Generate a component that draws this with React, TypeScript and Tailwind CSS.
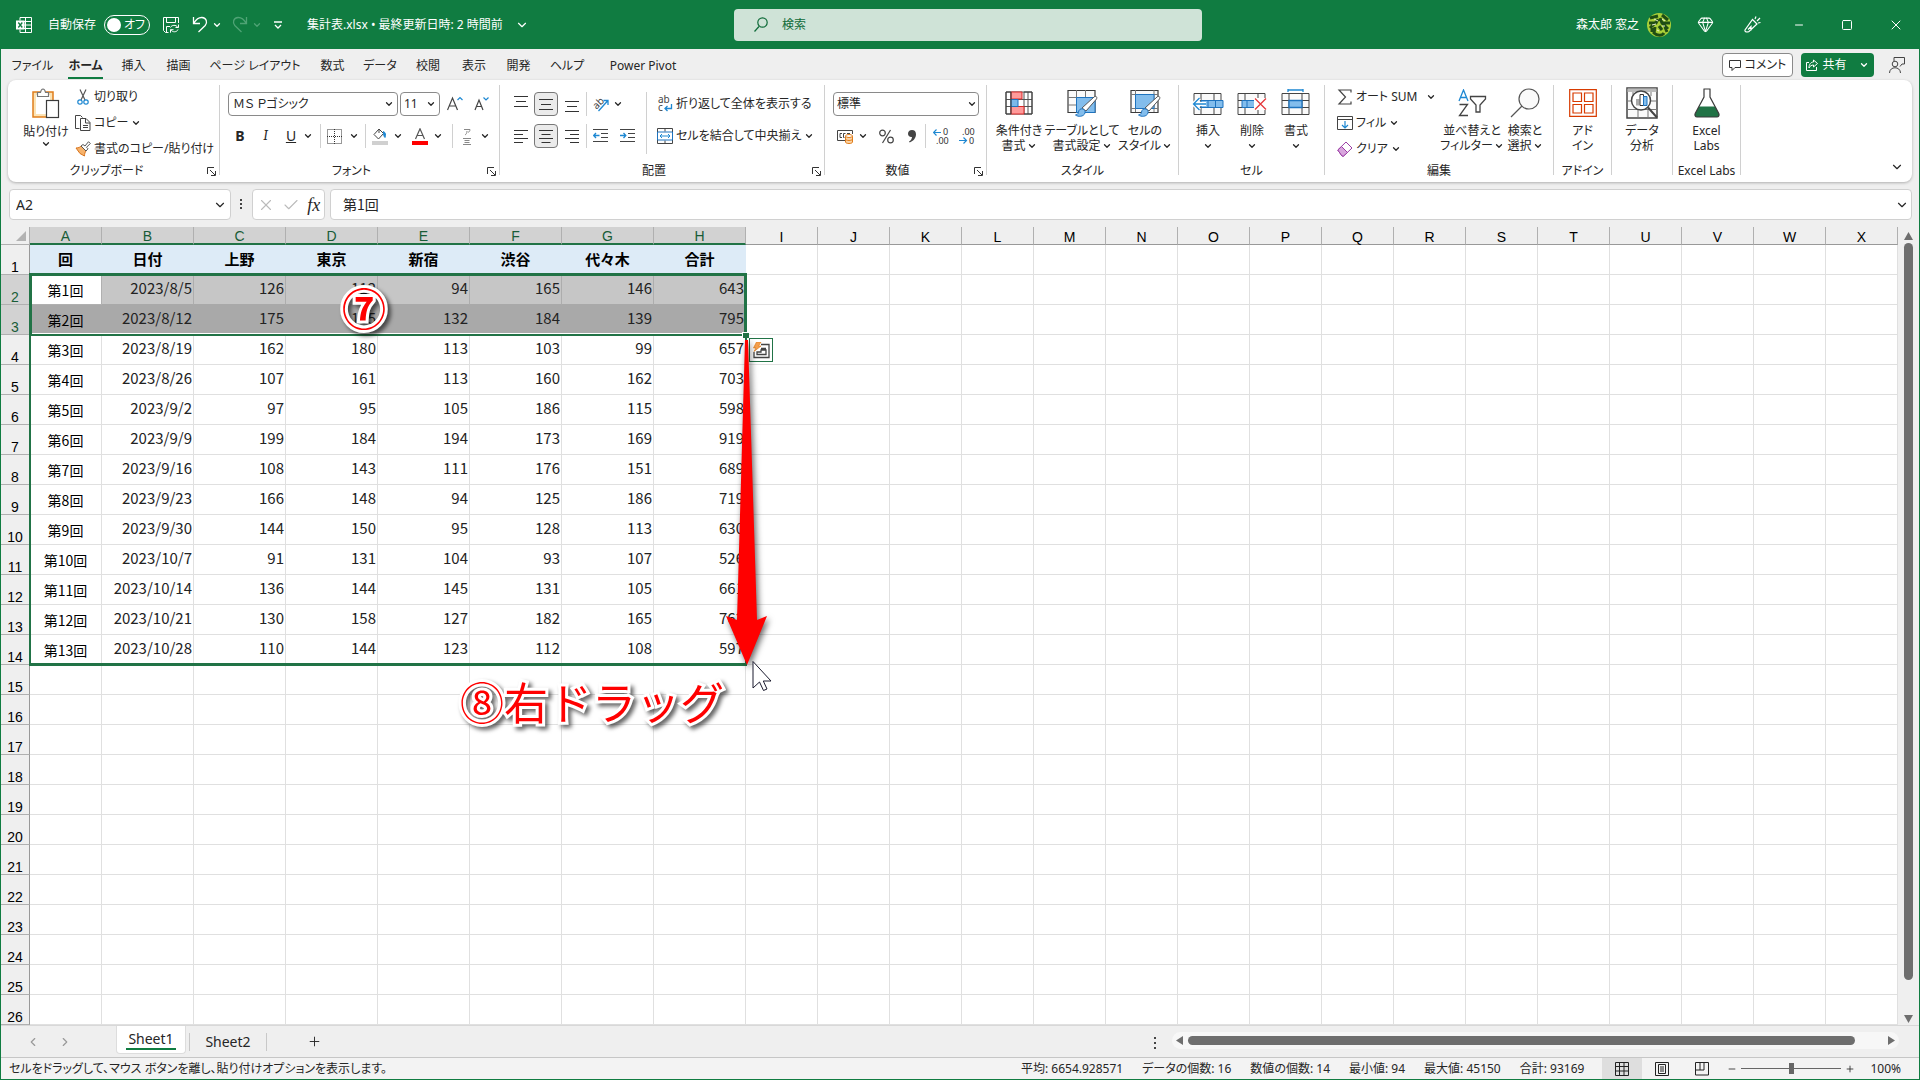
import React from 'react';
import { ChevronDown, ChevronLeft, ChevronRight, Check, Gem, Minus, Plus, Square, X } from 'lucide-react';

const tabs = [
  { name: 'ファイル', width: 'w-[55px]' },
  { name: 'ホーム', width: 'w-[51px]' },
  { name: '挿入', width: 'w-[45px]' },
  { name: '描画', width: 'w-[45px]' },
  { name: 'ページ レイアウト', width: 'w-[108px]' },
  { name: '数式', width: 'w-[47px]' },
  { name: 'データ', width: 'w-[48px]' },
  { name: '校閲', width: 'w-[48px]' },
  { name: '表示', width: 'w-[44px]' },
  { name: '開発', width: 'w-[45px]' },
  { name: 'ヘルプ', width: 'w-[52px]' },
  { name: 'Power Pivot', width: 'w-[100px]' },
];

const columns = 'ABCDEFGHIJKLMNOPQRSTUVWX'.split('');
const headings = ['回', '日付', '上野', '東京', '新宿', '渋谷', '代々木', '合計'];
const records: (string | number)[][] = [
  ['第1回', '2023/8/5', 126, 112, 94, 165, 146, 643],
  ['第2回', '2023/8/12', 175, 165, 132, 184, 139, 795],
  ['第3回', '2023/8/19', 162, 180, 113, 103, 99, 657],
  ['第4回', '2023/8/26', 107, 161, 113, 160, 162, 703],
  ['第5回', '2023/9/2', 97, 95, 105, 186, 115, 598],
  ['第6回', '2023/9/9', 199, 184, 194, 173, 169, 919],
  ['第7回', '2023/9/16', 108, 143, 111, 176, 151, 689],
  ['第8回', '2023/9/23', 166, 148, 94, 125, 186, 719],
  ['第9回', '2023/9/30', 144, 150, 95, 128, 113, 630],
  ['第10回', '2023/10/7', 91, 131, 104, 93, 107, 526],
  ['第11回', '2023/10/14', 136, 144, 145, 131, 105, 661],
  ['第12回', '2023/10/21', 130, 158, 127, 182, 165, 762],
  ['第13回', '2023/10/28', 110, 144, 123, 112, 108, 597],
];
const rowNumbers = Array.from({ length: 26 }, (_, i) => i + 1);

const stats = ['平均: 6654.928571', 'データの個数: 16', '数値の個数: 14', '最小値: 94', '最大値: 45150', '合計: 93169'];

const Chevron: React.FC = () => <ChevronDown className="w-[10px] h-[10px] shrink-0" strokeWidth={3} />;

const Sep: React.FC = () => <div className="w-px h-6 shrink-0 bg-[#d0d0d0]" />;

const Launcher: React.FC<{ name: string }> = ({ name }) => (
  <button aria-label={name} className="absolute right-[3px] bottom-[6px]">
    <svg className="w-[9px] h-[9px]" viewBox="0 0 9 9" fill="none" stroke="#333">
      <path d="M.5 7V.5H7M3 3l5 5M8.500 4v4.500H4" />
    </svg>
  </button>
);

const Group: React.FC<{ label?: string; width: string; launcher?: boolean; children: React.ReactNode }> = ({
  label,
  width,
  launcher,
  children,
}) => (
  <div className={`flex shrink-0 ${width}`}>
    <div className="relative flex-1 min-w-0">
      <div className="h-[82px]">{children}</div>
      <div className={`text-center leading-[18px] whitespace-nowrap ${launcher ? 'pr-4' : ''}`}>{label}</div>
      {launcher && <Launcher name={`${label}の設定`} />}
    </div>
    <div className="w-px h-[90px] mt-[5px] bg-[#d0d0d0]" />
  </div>
);

const BigButton: React.FC<{ icon: React.ReactNode; lines: string[]; width: string; menu?: boolean }> = ({
  icon,
  lines,
  width,
  menu,
}) => (
  <button className={`flex flex-col items-center shrink-0 pt-[7px] ${width}`}>
    <span className="h-8 mb-1 flex items-center justify-center">{icon}</span>
    {lines.map((line, i) => (
      <span key={i} className="flex items-center justify-center gap-px h-[15px] leading-[15px] whitespace-nowrap">
        {line}
        {menu && i === lines.length - 1 && <Chevron />}
      </span>
    ))}
  </button>
);

const ExcelIcon = () => (
  <svg className="w-4 h-4" viewBox="0 0 16 16" fill="none" stroke="#fff">
    <path d="M4 3.500V.500h11.500v15H4v-3M9.500.500v15M4 4.500h11.500M8 8h7.500M4 11.500h11.500" />
    <rect x="0" y="3.500" width="8.500" height="9" fill="#fff" stroke="none" />
    <path d="M2.300 5.500l4 5M6.300 5.500l-4 5" stroke="#107c41" strokeWidth="1.300" />
  </svg>
);

const SaveIcon = () => (
  <svg className="w-4 h-4" viewBox="0 0 16 16" fill="none" stroke="#fff">
    <path d="M5.500 15.500H2.500l-2-2V.500h15V6M3.500.500v5h9v-5M3.500 15.500v-6H7" />
    <path d="M7.500 10.500c1-2.500 5.500-3.200 7.500 0M15.500 7.500v3h-3M15 12.500c-1 2.800-5.500 3.200-7.300.200M7.500 15.700v-3h3" />
  </svg>
);

const UndoIcon = () => (
  <svg className="w-4 h-[17px]" viewBox="0 0 16 17" fill="none" stroke="currentColor" strokeWidth="1.300">
    <path d="M1.500 1v6.500H8M1.800 7.200C4 3.500 7 1.300 10 1.500c4.500.3 5.800 5 3.200 8L6.500 16" />
  </svg>
);

const PasteIcon = () => (
  <svg className="w-[28px] h-[31px]" viewBox="0 0 28 31" fill="none">
    <rect x="1" y="4" width="20" height="25" fill="#fbe3b5" stroke="#e07d1b" strokeWidth="1.500" />
    <rect x="4" y="7" width="14" height="19" fill="#fff" />
    <path d="M5.500 8.500v-4h3C9 2 10 1 11 1s2 1 2.500 3.500h3v4z" fill="#fff" stroke="#777" strokeWidth="1.200" />
    <rect x="14.500" y="12.500" width="12" height="17" fill="#fff" stroke="#3b3b3b" strokeWidth="1.200" />
  </svg>
);

const CutIcon = () => (
  <svg className="w-4 h-4" viewBox="0 0 16 16" fill="none" strokeWidth="1.200">
    <path d="M5 .500l5 10.500M11 .500L6 11" stroke="#555" />
    <circle cx="5" cy="13" r="2.200" stroke="#1e88d2" />
    <circle cx="11" cy="13" r="2.200" stroke="#1e88d2" />
  </svg>
);

const CopyIcon = () => (
  <svg className="w-4 h-4" viewBox="0 0 16 16" fill="none" stroke="#444">
    <path d="M4.500 13.500h-4V.500h5l2 2M5.500 3.500h5.500l4 4v8H5.500zM10.500 3.500v4.500H15M8 10.500h5M8 12.500h5" />
  </svg>
);

const BrushIcon = () => (
  <svg className="w-4 h-4" viewBox="0 0 16 16" fill="none">
    <path d="M1 7c3 0 4-1 5-2l5 5c-1 1-1.500 3-1.500 5L5 12.500z" fill="#f6b26b" stroke="#d9731a" />
    <path d="M6 5l2-1.500L10 5l3.500-4.300L15.300 2.500 11.500 6.300l1.500 1.500L11 10z" fill="#fff" stroke="#555" />
  </svg>
);

const alignPaths = {
  top: 'M0 .5h14M2 5.500h10M0 10.500h14',
  wide: 'M0 1.500h14M0 5.500h9M0 9.500h14M0 13.500h9',
  center: 'M0 1.500h14M2.500 5.500h9M0 9.500h14M2.500 13.500h9',
  right: 'M0 1.500h14M5 5.500h9M0 9.500h14M5 13.500h9',
};

const Lines: React.FC<{ d: string }> = ({ d }) => (
  <svg className="w-[14px] h-[15px]" viewBox="0 0 14 15" fill="none" stroke="#333">
    <path d={d} />
  </svg>
);

const IndentIcon: React.FC<{ out?: boolean }> = ({ out }) => (
  <svg className="w-[15px] h-[14px]" viewBox="0 0 15 14" fill="none" stroke="#444">
    <path d="M0 .500h15M8 4.500h7M8 8.500h7M0 12.500h15" />
    <path d={out ? 'M6.500 6.500H1M3 4L.700 6.500 3 9' : 'M0 6.500h5.500M3.500 4l2.300 2.500L3.500 9'} stroke="#1e88d2" strokeWidth="1.300" />
  </svg>
);

const BordersIcon = () => (
  <svg className="w-[15px] h-[15px]" viewBox="0 0 15 15" fill="none" stroke="#333">
    <path d="M.500 .500h14v14H.500zM7.500 0v15M0 7.500h15" strokeDasharray="1 1" />
  </svg>
);

const FillIcon = () => (
  <svg className="w-4 h-[17px]" viewBox="0 0 16 17" fill="none">
    <path d="M7 1L2 6.500l4.500 4.500 5-5.500L7 1V5" stroke="#444" />
    <path d="M11.500 3.500c2 1 2.500 3 1.500 6-1-1-1.500-2-1.500-6z" fill="#1e88d2" stroke="#1e88d2" />
    <rect y="13" width="16" height="4" fill="#d0d0d0" />
  </svg>
);

const FontColorIcon = () => (
  <svg className="w-4 h-[17px]" viewBox="0 0 16 17" fill="none">
    <path d="M3.500 11L8 .800 12.500 11M5 7.500h6" stroke="#555" strokeWidth="1.200" />
    <rect y="13" width="16" height="4" fill="#f00" />
  </svg>
);

const CurrencyIcon = () => (
  <svg className="w-[17px] h-[15px]" viewBox="0 0 17 15" fill="none">
    <path d="M8 11.500H.500v-10h15V5" stroke="#444" />
    <path d="M5 4.500H3v4h2M8.500 4.500h-2v4h1M10 4.500h3" stroke="#444" />
    <path d="M8.500 7v6c0 2 7 2 7 0V7" fill="#fbd3a4" stroke="#e07d1b" />
    <ellipse cx="12" cy="7" rx="3.500" ry="1.500" fill="#fff" stroke="#e07d1b" />
    <path d="M8.500 10c0 2 7 2 7 0" stroke="#e07d1b" />
  </svg>
);

const DecimalIcon: React.FC<{ less?: boolean }> = ({ less }) => (
  <svg className="w-4 h-[17px]" viewBox="0 0 16 17" fill="none">
    <text x={less ? 3 : 10} y="7" fontSize="9" fill="#333">{less ? '.00' : '0'}</text>
    <text x={less ? 10 : 3} y="16" fontSize="9" fill="#333">{less ? '0' : '.00'}</text>
    <path d={less ? 'M0 12.500h7M4.500 9.500l3 3-3 3' : 'M8 4.500H.500M3.500 1.500l-3 3 3 3'} stroke="#1e88d2" strokeWidth="1.200" />
  </svg>
);

const ConditionalIcon = () => (
  <svg className="w-[28px] h-[24px]" viewBox="0 0 28 24" fill="none">
    <path d="M1 1h26v22H1zM1 8.500h26M1 15.500h26M6 1v22M19 1v22M23 1v22" stroke="#555" />
    <path d="M6 1h11v7H6zM6 15.500h13V23H6z" fill="#ff9a9a" stroke="#d92b2b" />
    <path d="M6 8.500h7v7H6z" fill="#7cb9ea" stroke="#1e73be" />
    <path d="M1 1h5v22H1zM19 1h8v22h-8" stroke="#3b3b3b" />
  </svg>
);

const StyleIcon: React.FC<{ cell?: boolean }> = ({ cell }) => (
  <svg className="w-[31px] h-[28px]" viewBox="0 0 31 28" fill="none">
    <path d="M1 1.500h27v22H1z" fill="#fafafa" stroke="#3b3b3b" strokeWidth="1.200" />
    {cell ? (
      <path d="M1 5.500h27M1 19.500h27M5.500 1v22M24 1v22" stroke="#777" />
    ) : (
      <path d="M1 8.500h27M1 16h27M9.500 1v22M18.500 1v22" stroke="#777" />
    )}
    <path d={cell ? 'M5.500 5.500H24v14H5.500z' : 'M9.500 8.500H28v15H9.500z'} fill="#83bdec" stroke="#1e73be" />
    <path d="M15 19L27 8c2-1.500 3.500 0 2.500 2L19 22z" fill="#fff" stroke="#555" />
    <path d="M8.500 26c3-.500 2.500-2 3.500-4.500 2-3.500 7-1 6 2.500-1.300 4-7 4-9.500 2z" fill="#83bdec" stroke="#1e73be" />
  </svg>
);

const CellsIcon: React.FC<{ kind: 'insert' | 'delete' | 'format' }> = ({ kind }) => (
  <svg className="w-8 h-[28px]" viewBox="0 0 32 28" fill="none">
    <path d="M2 4.500h27v21H2zM2 11.500h27M2 18.500h27M9 4.500v21M22 4.500v21" fill="#fafafa" stroke="#444" />
    {kind === 'insert' && (
      <>
        <path d="M9 11.500h22v7H9zM16 11.500v7M23.500 11.500v7" fill="#83bdec" stroke="#1e73be" />
        <path d="M14 15H2M7.500 9L1.500 15l6 6" stroke="#fff" strokeWidth="4" />
        <path d="M14 15H2M7.500 9L1.500 15l6 6" stroke="#1e88d2" strokeWidth="1.300" />
      </>
    )}
    {kind === 'delete' && (
      <>
        <path d="M6 11.500h13v7H6zM11 11.500v7" fill="#83bdec" stroke="#1e73be" />
        <path d="M18 9h14v12H18z" fill="#fff" />
        <path d="M19 9.500l11 11M30 9.500l-11 11" stroke="#e5393c" strokeWidth="1.300" />
      </>
    )}
    {kind === 'format' && (
      <>
        <path d="M9 11.500h13v7H9z" fill="#83bdec" stroke="#1e73be" strokeWidth="1.300" />
        <path d="M8 1h15M8 -1v4M23 -1v4" stroke="#1e88d2" strokeWidth="1.300" />
      </>
    )}
  </svg>
);

const SortIcon = () => (
  <svg className="w-[30px] h-[28px]" viewBox="0 0 30 28" fill="none" strokeWidth="1.300">
    <path d="M2 12L6.500 1 11 12M3.500 8.500h6" stroke="#1e88d2" />
    <path d="M2.500 15.500h8l-8 11h8.500" stroke="#444" />
    <path d="M13.500 7.500h15v2.500l-5.500 6v7h-4v-7l-5.500-6z" stroke="#444" />
  </svg>
);

const FindIcon = () => (
  <svg className="w-[30px] h-[30px]" viewBox="0 0 30 30" fill="none" stroke="#555" strokeWidth="1.200">
    <circle cx="19" cy="11" r="10" fill="#fafafa" />
    <path d="M12 18L1 29" />
  </svg>
);

const AddinIcon = () => (
  <svg className="w-[28px] h-[28px]" viewBox="0 0 28 28" fill="none" stroke="#d83b01" strokeWidth="1.200">
    <path d="M.700 .700h26.600v26.600H.700zM4 4h8.500v8.500H4zM15.500 4H24v8.500h-8.500zM4 15.500h8.500V24H4zM15.500 15.500H24V24h-8.500z" />
  </svg>
);

const AnalyzeIcon = () => (
  <svg className="w-8 h-8" viewBox="0 0 32 32" fill="none">
    <path d="M1 1h30v30H1z" fill="#fafafa" stroke="#444" strokeWidth="1.500" />
    <path d="M1.500 1.500h29v3.500h-29z" fill="#bbb" />
    <path d="M1 14h30M1 22.500h30M12 22v9M22 22v9M7 5v4M25 5v4" stroke="#777" />
    <circle cx="15" cy="13.500" r="9.500" fill="#fff" stroke="#444" strokeWidth="1.500" />
    <path d="M22 20.500l9 10" stroke="#444" strokeWidth="2" />
    <path d="M10 12h3.500v6.500H10z" fill="#aaa" />
    <path d="M14 7.500h3.500v11H14z" fill="#fff" stroke="#333" />
    <path d="M17.500 9.500H21v9h-3.500z" fill="#83bdec" stroke="#1e73be" />
  </svg>
);

const FlaskIcon = () => (
  <svg className="w-[26px] h-[30px]" viewBox="0 0 26 30" fill="none">
    <path d="M5 18.500h16l4 7.500c.800 2-.2 3-2 3H3c-1.800 0-2.800-1-2-3z" fill="#217346" />
    <path d="M9.500 1h7M10 1v8L1.200 25.500C.500 27.500 1.500 29 3 29h20c1.500 0 2.500-1.500 1.800-3.500L16 9V1" stroke="#3b3b3b" strokeWidth="1.200" />
  </svg>
);

const TitleBar: React.FC = () => (
  <header className="flex items-center justify-between h-[49px] bg-[#107c41] text-white">
    <div className="flex items-center flex-1 pl-4">
      <ExcelIcon />
      <label className="relative flex items-center gap-2 ml-4">
        自動保存
        <input
          type="checkbox"
          role="switch"
          className="appearance-none w-[46px] h-5 border border-white rounded-full before:block before:w-[14px] before:h-[14px] before:m-[2px] before:rounded-full before:bg-white"
        />
        <span className="absolute right-[5px]">オフ</span>
      </label>
      <button aria-label="上書き保存" className="ml-[13px]"><SaveIcon /></button>
      <button aria-label="元に戻す" className="flex items-center gap-1 ml-[13px]"><UndoIcon /><Chevron /></button>
      <button aria-label="やり直し" className="flex items-center gap-1 ml-[10px] text-[#4fa375]">
        <span className="-scale-x-100"><UndoIcon /></span><Chevron />
      </button>
      <button aria-label="クイック アクセスのユーザー設定" className="ml-[12px]">
        <svg className="w-[8px] h-[8px]" viewBox="0 0 8 8" fill="none" stroke="#fff" strokeWidth="1.300">
          <path d="M0 1h8M1 4l3 3 3-3" />
        </svg>
      </button>
      <button className="flex items-center gap-3 ml-[25px] whitespace-nowrap">
        集計表.xlsx • 最終更新日時: 2 時間前 <ChevronDown className="w-[14px] h-[14px]" />
      </button>
    </div>
    <label className="flex items-center w-[468px] h-8 ml-4 rounded bg-[#cfe3d7] text-[#0f6b39]">
      <svg className="w-[14px] h-[15px] ml-5 mr-[14px] shrink-0" viewBox="0 0 14 15" fill="none" stroke="currentColor" strokeWidth="1.200">
        <circle cx="8.500" cy="5.500" r="4.700" />
        <path d="M5 9.500L.500 14.500" />
      </svg>
      <input aria-label="検索" placeholder="検索" className="flex-1 bg-transparent outline-none placeholder:text-[#0f6b39]" />
    </label>
    <div className="flex items-center justify-end flex-1 pr-4">
      <span>森太郎 窓之</span>
      <svg className="w-6 h-6 ml-2" viewBox="0 0 24 24" fill="none">
        <circle cx="12" cy="12" r="12" fill="#a9cf38" />
        <path d="M3 5l8-2M15 2l6 5M2 10h7l2-4M13 5l2 5h8M9 9l-6 6M15 10l6 6M5 19v-4M8 14l-1 6c3 3 8 3 10 0M12 13l3 4M18 14l2 5" stroke="#1f4d14" strokeWidth="3" />
        <path d="M7 6l4 2M15 6l3 2M5 12l4-1M15 13h3M10 17l2 1" stroke="#e6efcf" />
      </svg>
      <button aria-label="Premium" className="ml-[26px]"><Gem className="w-[17px] h-[17px]" strokeWidth={1.5} /></button>
      <button aria-label="近日公開の機能" className="ml-[30px]">
        <svg className="w-[17px] h-[17px]" viewBox="0 0 17 17" fill="none" stroke="#fff" strokeWidth="1.200">
          <path d="M8.500 3.500L13 8 5 15.500c-2 1-4.500.500-4-1.500zM7 14.500v-4l-3 3M11 3l1-2.500M13 5l3-3M14 7l2.500-.5" />
        </svg>
      </button>
      <button aria-label="最小化" className="ml-[32px]"><Minus className="w-3 h-3" /></button>
      <button aria-label="最大化" className="ml-[36px]"><Square className="w-3 h-3" /></button>
      <button aria-label="閉じる" className="ml-[35px]"><X className="w-4 h-4" strokeWidth={1.5} /></button>
    </div>
  </header>
);

const TabBar: React.FC = () => (
  <nav className="flex items-center h-[31px] pl-1 pr-[14px]">
    {tabs.map((tab) => (
      <button key={tab.name} className={`flex justify-center shrink-0 whitespace-nowrap ${tab.width}`}>
        <span
          className={
            tab.name === 'ホーム'
              ? 'mt-[3px] h-[25px] leading-6 font-bold border-b-2 border-[#107c41]'
              : 'h-[25px] leading-[27px]'
          }
        >
          {tab.name}
        </span>
      </button>
    ))}
    <div className="flex-1" />
    <button className="flex items-center justify-center gap-1 w-[71px] h-6 bg-white border border-[#8a8a8a] rounded">
      <svg className="w-3 h-3" viewBox="0 0 12 12" fill="none" stroke="#333">
        <path d="M.500 1.500h11v7H6l-3 3v-3H.500z" />
      </svg>
      コメント
    </button>
    <button className="flex items-center justify-center gap-1 w-[73px] h-6 ml-2 bg-[#107c41] text-white rounded">
      <svg className="w-3 h-3" viewBox="0 0 12 12" fill="none" stroke="#fff">
        <path d="M3 3.500H.500v8h10V8M7.500 1l4 3.500-4 3.500V6C5.500 6 4 7 3 9c0-4 2-6 4.500-6z" />
      </svg>
      共有
      <span className="ml-2"><Chevron /></span>
    </button>
    <button aria-label="アカウント" className="ml-[15px]">
      <svg className="w-4 h-4" viewBox="0 0 16 16" fill="none" stroke="#444">
        <path d="M5 4V.500h10.500v6.500H13l-2 2.500" />
        <circle cx="6" cy="7" r="2.800" />
        <path d="M.500 16c0-7 11-7 11 0" />
      </svg>
    </button>
  </nav>
);

const Ribbon: React.FC = () => (
  <section className="relative flex h-[102px] mx-[7px] pl-[2px] bg-white rounded-lg shadow-[0_1px_3px_#0004]">
    <Group label="クリップボード" width="w-[210px]" launcher>
      <div className="flex">
        <button className="flex flex-col items-center w-[60px] ml-[6px] pt-[8px]">
          <PasteIcon />
          <span className="mt-[5px] h-[15px] leading-[15px] whitespace-nowrap">貼り付け</span>
          <Chevron />
        </button>
        <div className="pt-1 -ml-px whitespace-nowrap">
          <button className="flex items-center gap-[3px] h-[26px]"><CutIcon /> 切り取り</button>
          <button className="flex items-center gap-[3px] h-[26px]"><CopyIcon /> コピー <Chevron /></button>
          <button className="flex items-center gap-[3px] h-[26px]"><BrushIcon /> 書式のコピー/貼り付け</button>
        </div>
      </div>
    </Group>

    <Group label="フォント" width="w-[280px]" launcher>
      <div className="flex flex-col gap-2 pt-3 pl-2">
        <div className="flex items-center h-6">
          <div className="relative w-[170px]">
            <select aria-label="フォント" className="appearance-none w-full h-6 px-1 border border-[#8a8a8a] rounded">
              <option>ＭＳ Ｐゴシック</option>
            </select>
            <span className="absolute right-1 top-[7px] pointer-events-none"><Chevron /></span>
          </div>
          <div className="relative w-10 ml-[2px]">
            <select aria-label="フォント サイズ" className="appearance-none w-full h-6 px-[3px] border border-[#8a8a8a] rounded">
              <option>11</option>
            </select>
            <span className="absolute right-1 top-[7px] pointer-events-none"><Chevron /></span>
          </div>
          <button aria-label="フォント サイズの拡大" className="ml-[7px]">
            <svg className="w-4 h-4" viewBox="0 0 16 16" fill="none" strokeWidth="1.200">
              <path d="M.500 14L5.500 2l5 12M2.500 10h6" stroke="#444" />
              <path d="M10.500 4L13 1.500 15.500 4" stroke="#1e88d2" />
            </svg>
          </button>
          <button aria-label="フォント サイズの縮小" className="ml-[11px]">
            <svg className="w-4 h-4" viewBox="0 0 16 16" fill="none" strokeWidth="1.200">
              <path d="M1 14L5 4l4 10M2.500 10.500h5" stroke="#444" />
              <path d="M9.500 1.500L12 4 14.500 1.500" stroke="#1e88d2" />
            </svg>
          </button>
        </div>
        <div className="flex items-center h-6">
          <button className="w-6 text-sm font-bold">B</button>
          <button className="w-[27px] text-sm italic font-serif">I</button>
          <button className="w-6 text-sm underline">U</button>
          <Chevron />
          <div className="w-[7px]" /><Sep />
          <button aria-label="罫線" className="flex items-center gap-[7px] mx-[6px]"><BordersIcon /><Chevron /></button>
          <Sep />
          <button aria-label="塗りつぶしの色" className="flex items-center gap-[5px] ml-[6px]"><FillIcon /><Chevron /></button>
          <button aria-label="フォントの色" className="flex items-center gap-[5px] mx-[9px]"><FontColorIcon /><Chevron /></button>
          <Sep />
          <button aria-label="ふりがなの表示" className="flex items-center gap-[8px] ml-[9px]">
            <svg className="w-[10px] h-[17px]" viewBox="0 0 10 17" fill="none" stroke="#888">
              <path d="M2 1.500h6c0 1.500-1 2.500-2 3M5 3c0 2-1 3.500-2 4M1 10.500h8M2.500 12.500h5M2.500 14.500h5M1 16.500h8" />
            </svg>
            <Chevron />
          </button>
        </div>
      </div>
    </Group>

    <Group label="配置" width="w-[325px]" launcher>
      <div className="flex pt-3 pl-2">
        <div className="flex flex-col gap-2">
          <div className="flex items-center h-6">
            <button aria-label="上揃え" className="flex justify-center items-start w-[26px] h-4"><Lines d={alignPaths.top} /></button>
            <button aria-label="上下中央揃え" className="flex justify-center items-center w-6 h-6 pt-1 border border-[#777] rounded bg-[#ebebeb]"><Lines d={alignPaths.top} /></button>
            <button aria-label="下揃え" className="flex justify-center items-end w-[28px] h-[24px]"><Lines d={alignPaths.top} /></button>
            <Sep />
            <button aria-label="方向" className="flex items-center gap-1 ml-[6px]">
              <svg className="w-4 h-4" viewBox="0 0 16 16" fill="none">
                <text x="0" y="11" fontSize="10" fill="#444" transform="rotate(-45 5 8)">ab</text>
                <path d="M5.500 15L14.500 5M10.500 4.500h4.500V9" stroke="#1e88d2" strokeWidth="1.300" />
              </svg>
              <Chevron />
            </button>
          </div>
          <div className="flex items-center h-6">
            <button aria-label="左揃え" className="flex justify-center w-[26px]"><Lines d={alignPaths.wide} /></button>
            <button aria-label="中央揃え" className="flex justify-center items-center w-6 h-6 border border-[#777] rounded bg-[#ebebeb]"><Lines d={alignPaths.center} /></button>
            <button aria-label="右揃え" className="flex justify-center w-[28px]"><Lines d={alignPaths.right} /></button>
            <Sep />
            <button aria-label="インデントを減らす" className="ml-[6px]"><IndentIcon out /></button>
            <button aria-label="インデントを増やす" className="ml-[12px]"><IndentIcon /></button>
          </div>
        </div>
        <div className="w-px h-[62px] ml-[11px] bg-[#d0d0d0]" />
        <div className="flex flex-col gap-2 ml-[10px] whitespace-nowrap">
          <button className="flex items-center gap-[3px] h-6">
            <svg className="w-4 h-5" viewBox="0 0 16 20" fill="none">
              <text x="1" y="9" fontSize="10" fill="#444">ab</text>
              <text x="1" y="17" fontSize="10" fill="#444">c</text>
              <path d="M14.500 10v4.500H8M10.500 12L8 14.500l2.500 2.500" stroke="#1e88d2" strokeWidth="1.300" />
            </svg>
            折り返して全体を表示する
          </button>
          <button className="flex items-center gap-[3px] h-6">
            <svg className="w-4 h-4" viewBox="0 0 16 16" fill="none" stroke="#444">
              <path d="M.500 .500h15v15H.500zM8 .500v3M8 12.500v3" />
              <path d="M.500 4h15v8H.500z" stroke="#1e73be" fill="#fff" />
              <path d="M3 8h10M5 6L3 8l2 2M11 6l2 2-2 2" stroke="#1e88d2" />
            </svg>
            セルを結合して中央揃え
            <Chevron />
          </button>
        </div>
      </div>
    </Group>

    <Group label="数値" width="w-[162px]" launcher>
      <div className="flex flex-col gap-2 pt-3 pl-2">
        <div className="relative w-[146px]">
          <select aria-label="表示形式" className="appearance-none w-full h-6 px-[3px] border border-[#8a8a8a] rounded">
            <option>標準</option>
          </select>
          <span className="absolute right-[2px] top-[7px] pointer-events-none"><Chevron /></span>
        </div>
        <div className="flex items-center h-6">
          <button aria-label="通貨表示形式" className="flex items-center gap-1 ml-1"><CurrencyIcon /><Chevron /></button>
          <button aria-label="パーセント スタイル" className="ml-[11px]">
            <svg className="w-[15px] h-[15px]" viewBox="0 0 15 15" fill="none" stroke="#444" strokeWidth="1.200">
              <circle cx="3.500" cy="4" r="2.800" />
              <circle cx="11.500" cy="11" r="2.800" />
              <path d="M11.500 1l-8 13" />
            </svg>
          </button>
          <button aria-label="桁区切りスタイル" className="ml-[14px]">
            <svg className="w-[8px] h-[13px]" viewBox="0 0 8 13" fill="#444">
              <path d="M4 0C1.500 0 0 1.500 0 3.700c0 2 1.500 3.500 4 3.200-.2 2-1.200 3.500-3 4.600l.7 1C5.500 11 8 8 8 4.300 8 1.500 6.500 0 4 0z" />
            </svg>
          </button>
          <div className="w-[9px]" /><Sep />
          <button aria-label="小数点以下の表示桁数を増やす" className="ml-[7px]"><DecimalIcon /></button>
          <button aria-label="小数点以下の表示桁数を減らす" className="ml-[10px]"><DecimalIcon less /></button>
        </div>
      </div>
    </Group>

    <Group label="スタイル" width="w-[192px]">
      <div className="flex pl-[2px]">
        <BigButton icon={<ConditionalIcon />} lines={['条件付き', '書式']} width="w-[60px]" menu />
        <BigButton icon={<StyleIcon />} lines={['テーブルとして', '書式設定']} width="w-[66px]" menu />
        <BigButton icon={<StyleIcon cell />} lines={['セルの', 'スタイル']} width="w-[60px]" menu />
      </div>
    </Group>

    <Group label="セル" width="w-[146px]">
      <div className="flex pl-[7px]">
        <BigButton icon={<CellsIcon kind="insert" />} lines={['挿入', '']} width="w-11" menu />
        <BigButton icon={<CellsIcon kind="delete" />} lines={['削除', '']} width="w-11" menu />
        <BigButton icon={<CellsIcon kind="format" />} lines={['書式', '']} width="w-11" menu />
      </div>
    </Group>

    <Group label="編集" width="w-[229px]">
      <div className="flex">
        <div className="w-[117px] pl-3 pt-1 whitespace-nowrap">
          <button className="flex items-center gap-[3px] h-[26px]">
            <svg className="w-4 h-4" viewBox="0 0 16 16" fill="none" stroke="#444" strokeWidth="1.200">
              <path d="M14 3.500V1H2l6.500 7L2 15h12v-2.500" />
            </svg>
            オート SUM
            <span className="ml-[6px]"><Chevron /></span>
          </button>
          <button className="flex items-center gap-[3px] h-[26px]">
            <svg className="w-4 h-4" viewBox="0 0 16 16" fill="none" stroke="#444">
              <path d="M.500 1.500h15v13H.500zM.500 4.500h15" />
              <path d="M8 6v7M5 10l3 3 3-3" stroke="#1e88d2" strokeWidth="1.200" />
            </svg>
            フィル <Chevron />
          </button>
          <button className="flex items-center gap-[3px] h-[26px]">
            <svg className="w-4 h-4" viewBox="0 0 16 16" fill="none" stroke="#9b3fa5">
              <path d="M.800 9L9 1l6 6-8.500 8.200L5 15z" fill="#fff" />
              <path d="M.800 9L4.500 5.500l6 6L6.500 15H5z" fill="#d9a6de" />
            </svg>
            クリア <Chevron />
          </button>
        </div>
        <BigButton icon={<SortIcon />} lines={['並べ替えと', 'フィルター']} width="w-[60px]" menu />
        <BigButton icon={<FindIcon />} lines={['検索と', '選択']} width="w-[46px]" menu />
      </div>
    </Group>

    <Group label="アドイン" width="w-[58px]">
      <BigButton icon={<AddinIcon />} lines={['アド', 'イン']} width="w-full" />
    </Group>
    <Group width="w-[61px]">
      <BigButton icon={<AnalyzeIcon />} lines={['データ', '分析']} width="w-full" />
    </Group>
    <Group label="Excel Labs" width="w-[68px]">
      <BigButton icon={<FlaskIcon />} lines={['Excel', 'Labs']} width="w-full" />
    </Group>
    <button aria-label="リボンの表示オプション" className="ml-auto mr-2 mt-auto mb-2">
      <ChevronDown className="w-[14px] h-[14px]" />
    </button>
  </section>
);

const FormulaBar: React.FC = () => (
  <div className="flex items-center h-[31px] mt-[7px] mb-[7px] mx-[7px] pl-px">
    <div className="flex items-center w-[222px] h-[31px] pl-[6px] pr-[3px] bg-white border border-[#d0d0d0] rounded">
      <input aria-label="名前ボックス" defaultValue="A2" className="flex-1 min-w-0 text-sm outline-none" />
      <ChevronDown className="w-[14px] h-[14px]" />
    </div>
    <svg className="w-[3px] h-[11px] mx-[9px]" viewBox="0 0 3 11" fill="#444">
      <path d="M0 0h2v2H0zM0 4h2v2H0zM0 8h2v2H0z" />
    </svg>
    <div className="flex items-center justify-around w-[73px] h-[31px] bg-white border border-[#d0d0d0] rounded">
      <button aria-label="キャンセル"><X className="w-[18px] h-[18px] text-[#bbb]" strokeWidth={1.5} /></button>
      <button aria-label="入力"><Check className="w-[18px] h-[18px] text-[#bbb]" strokeWidth={1.5} /></button>
      <button className="font-['Liberation_Serif',serif] italic text-lg leading-5">fx</button>
    </div>
    <div className="flex flex-1 items-center h-[31px] ml-[5px] pl-3 pr-[2px] bg-white border border-[#d0d0d0] rounded">
      <input aria-label="数式バー" defaultValue="第1回" className="flex-1 text-sm leading-[18px] pb-[2px] font-['Noto_Sans_CJK_JP',sans-serif] outline-none" />
      <ChevronDown className="w-[14px] h-[14px]" />
    </div>
  </div>
);

const cellClass = (row: number, col: number) => {
  const base = 'h-[30px] p-0 align-top border-b border-r ';
  if (row === 1 && col < 8) return base + 'bg-[#ddebf7] border-[#ddebf7]';
  if (row === 2 && col === 0) return base + 'bg-white border-[#b0b0b0]';
  if (row === 2 && col < 8) return base + 'bg-[#c6c6c6] border-r-[#adadad] border-b-[#a9a9a9]';
  if (row === 3 && col < 8) return base + 'bg-[#a9a9a9] border-[#a9a9a9]';
  return base + 'bg-white border-[#e0e0e0]';
};

const Sheet: React.FC = () => (
  <div className="relative flex-1 min-w-0 overflow-hidden">
    <table className="table-fixed w-max border-separate border-spacing-0 font-['Noto_Sans_CJK_JP',sans-serif] text-black">
      <colgroup>
        <col className="w-[29px]" />
        {columns.map((c, i) => (
          <col key={c} className={i > 0 && i < 8 ? 'w-[92px]' : 'w-[72px]'} />
        ))}
      </colgroup>
      <thead>
        <tr className="font-['Liberation_Sans',sans-serif] text-sm leading-[14px]">
          <th aria-label="すべて選択" className="relative h-[18px] p-0 border-r border-b border-[#b0b0b0]">
            <svg className="absolute right-[3px] bottom-[3px] w-[10px] h-[10px]" viewBox="0 0 10 10" fill="#b3b3b3">
              <path d="M10 0v10H0z" />
            </svg>
          </th>
          {columns.map((c, i) => (
            <th
              key={c}
              className={
                i < 8
                  ? 'h-[18px] p-0 pt-[2px] font-normal border-r border-r-[#b0b0b0] border-b-2 border-b-[#217346] bg-[#d2d2d2] text-[#185c37]'
                  : 'h-[18px] p-0 pt-[2px] font-normal border-r border-r-[#b0b0b0] border-b border-b-[#999]'
              }
            >
              {c}
            </th>
          ))}
        </tr>
      </thead>
      <tbody>
        {rowNumbers.map((n) => (
          <tr key={n}>
            <th
              className={`h-[30px] p-0 align-bottom font-normal font-['Liberation_Sans',sans-serif] text-sm leading-[14px] border-b border-r border-b-[#b0b0b0] border-r-[#999] ${
                n === 2 || n === 3 ? 'bg-[#d2d2d2] text-[#185c37]' : ''
              }`}
            >
              {n}
            </th>
            {columns.map((c, i) => {
              const value = n === 1 ? headings[i] : records[n - 2]?.[i];
              return (
                <td key={c} className={cellClass(n, i)}>
                  {n === 1 && value && <div className="text-center text-[15px] leading-[27px] font-bold">{value}</div>}
                  {n > 1 && i === 0 && value && <div className="pt-[2px] text-center text-sm leading-[27px]">{value}</div>}
                  {n > 1 && i > 0 && <div className="pr-px text-right text-[15px] leading-[26px] text-[#222]">{value}</div>}
                </td>
              );
            })}
          </tr>
        ))}
      </tbody>
    </table>

    {/* Drag outline and current selection */}
    <div className="absolute left-[28px] top-[46px] w-[718px] h-[393px] border-2 border-y-3 border-[#217346]" />
    <div className="absolute left-[28px] top-[46px] w-[718px] h-[63px] border-3 border-b-2 border-[#217346] shadow-[inset_0_-1px_#fff]" />
    <div className="absolute left-[741px] top-[105px] w-[7px] h-[6px] bg-[#217346] border border-white border-r-0 border-b-0" />
    <button aria-label="クイック分析" className="absolute left-[748px] top-[111px] w-6 h-6 flex items-center justify-center bg-white border border-[#217346]">
      <svg className="w-[17px] h-[17px]" viewBox="0 0 17 17" fill="none" stroke="#444" strokeWidth="1.300">
        <path d="M8 2.500h8v13H1V10M8 6.500h5M4 12.500v-2.500h4V8h5v4.500z" />
        <path d="M3.500 0H8L5.500 4H8L1 9.500 3 6H.500z" fill="#f6a04d" stroke="#e07d1b" strokeWidth=".700" />
      </svg>
    </button>

    {/* Step annotations */}
    <svg className="absolute left-[716px] top-[106px] w-[64px] h-[340px] drop-shadow-[2px_3px_3px_#0009]" viewBox="0 0 64 340">
      <path d="M28 7h3l9 280 10-4-20 49-21-49 11 4z" fill="#f00" />
    </svg>
    <span className="absolute left-[341px] top-[56px] text-[44px] leading-[48px] font-bold text-[#f00] font-['Noto_Sans_CJK_JP',sans-serif] [-webkit-text-stroke:6px_white] [paint-order:stroke_fill] drop-shadow-[3px_3px_2px_#0009]">
      ⑦
    </span>
    <span className="absolute left-[459px] top-[450px] text-[44px] leading-[48px] whitespace-nowrap text-[#f00] font-['Noto_Sans_CJK_JP',sans-serif] [font-feature-settings:normal] [-webkit-text-stroke:6px_white] [paint-order:stroke_fill] drop-shadow-[3px_3px_2px_#0009]">
      ⑧右ドラッグ
    </span>
    <svg className="absolute left-[751px] top-[433px] w-5 h-8" viewBox="0 0 20 32">
      <path d="M1 1.500v26.500l6.500-6 4 8.500 3.500-1.500-3.700-8H19z" fill="#fff" stroke="#1a1a2e" />
    </svg>
  </div>
);

const SheetTabs: React.FC = () => (
  <div className="flex h-8 pl-[25px] pr-5 border-t border-[#d8d8d8] text-sm">
    <div className="flex items-center gap-[18px] w-[90px] text-[#999]">
      <ChevronLeft className="w-[14px] h-[14px]" />
      <ChevronRight className="w-[14px] h-[14px]" />
    </div>
    <button className="w-[70px] h-7 flex justify-center bg-white rounded-b border border-t-0 border-[#ddd]">
      <span className="h-6 px-[2px] leading-[26px] border-b-2 border-[#107c41]">Sheet1</span>
    </button>
    <div className="w-px h-[18px] mt-[7px] ml-[3px] bg-[#c8c8c8]" />
    <button className="w-[76px] leading-8">Sheet2</button>
    <div className="w-px h-[18px] mt-[7px] bg-[#c8c8c8]" />
    <button aria-label="新しいシート" className="ml-10"><Plus className="w-[15px] h-[15px]" strokeWidth={1.5} /></button>
    <div className="flex-1" />
    <svg className="w-[2px] h-[12px] mt-[11px] mr-4" viewBox="0 0 2 12" fill="#444">
      <path d="M0 0h2v2H0zM0 5h2v2H0zM0 10h2v2H0z" />
    </svg>
    <div className="flex items-center gap-[4px] w-[727px] h-[17px] mt-[6px] px-1 rounded-full bg-[#f7f7f7] text-[#6e6e6e]">
      <svg className="w-[8px] h-[9px]" viewBox="0 0 8 9" fill="currentColor"><path d="M7 0v9L0 4.500z" /></svg>
      <div className="flex-1 mr-[28px] h-[9px] rounded-full bg-[#6e6e6e]" />
      <svg className="w-[8px] h-[9px]" viewBox="0 0 8 9" fill="currentColor"><path d="M1 0v9l7-4.500z" /></svg>
    </div>
  </div>
);

const StatusBar: React.FC = () => (
  <footer className="flex items-center h-[22px] pl-2 pr-[18px] border-t border-[#c6c6c6] bg-[#f3f3f3] whitespace-nowrap">
    <span className="flex-1">セルをドラッグして、マウス ボタンを離し、貼り付けオプションを表示します。</span>
    <div className="flex gap-[19px] mr-[18px]">
      {stats.map((s) => (
        <span key={s}>{s}</span>
      ))}
    </div>
    <button aria-label="標準" className="flex items-center justify-center w-10 h-[21px] bg-[#dedede]">
      <svg className="w-[14px] h-[14px]" viewBox="0 0 14 14" fill="none" stroke="#222">
        <path d="M.500 .500h13v13H.500zM.500 4.500h13M.500 9h13M4.500 .500v13M9 .500v13" />
      </svg>
    </button>
    <button aria-label="ページ レイアウト" className="flex items-center justify-center w-10 h-[21px]">
      <svg className="w-[14px] h-[14px]" viewBox="0 0 14 14" fill="none" stroke="#222">
        <path d="M.500 .500h13v13H.500zM3.500 2.500h7v9h-7zM5 5h4M5 7h4M5 9h4" />
      </svg>
    </button>
    <button aria-label="改ページ プレビュー" className="flex items-center justify-center w-10 h-[21px]">
      <svg className="w-[14px] h-[14px]" viewBox="0 0 14 14" fill="none" stroke="#222">
        <path d="M.500 .500h13v12.500H.500zM5 .500V8M.500 8h8.500V.500" />
      </svg>
    </button>
    <button aria-label="縮小" className="ml-[5px]"><Minus className="w-[10px] h-[10px]" /></button>
    <input
      type="range"
      aria-label="ズーム"
      defaultValue={50}
      className="appearance-none w-[100px] h-[11px] mx-1 bg-[linear-gradient(#666,#666)] bg-[length:100%_1px] bg-center bg-no-repeat [&::-webkit-slider-thumb]:appearance-none [&::-webkit-slider-thumb]:w-[5px] [&::-webkit-slider-thumb]:h-[11px] [&::-webkit-slider-thumb]:bg-[#666]"
    />
    <button aria-label="拡大"><Plus className="w-[10px] h-[10px]" /></button>
    <span className="ml-[15px]">100%</span>
  </footer>
);

const App: React.FC = () => {
  return (
    <div className="min-h-screen flex flex-col bg-[#efefef] text-xs text-[#262626] font-['Noto_Sans','Noto_Sans_CJK_JP',sans-serif] [font-feature-settings:'palt']">
      <TitleBar />
      <main className="flex flex-col flex-1 border border-t-0 border-[#107c41]">
        <TabBar />
        <Ribbon />
        <FormulaBar />
        <div className="flex">
          <Sheet />
          <div className="flex flex-col items-center w-[21px] pt-[5px] text-[#6e6e6e]">
            <svg className="w-[9px] h-[8px]" viewBox="0 0 9 8" fill="currentColor"><path d="M0 8h9L4.500 0z" /></svg>
            <div className="flex-1 w-[9px] mt-[3px] mb-[35px] rounded-full bg-[#6e6e6e]" />
            <svg className="w-[9px] h-[8px] mb-[2px]" viewBox="0 0 9 8" fill="currentColor"><path d="M0 0h9L4.500 8z" /></svg>
          </div>
        </div>
        <SheetTabs />
        <StatusBar />
      </main>
    </div>
  );
};

export default App;
